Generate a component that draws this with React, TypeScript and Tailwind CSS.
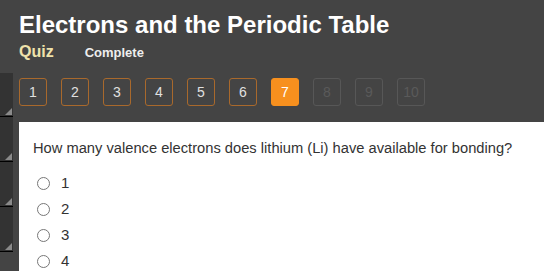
import React from "react";

const font = { fontFamily: '"Liberation Sans", Arial, sans-serif' };

function Tri() {
  return (
    <svg width="7" height="7" viewBox="0 0 7 7" className="absolute right-[1px] bottom-[1px]">
      <polygon points="7,0 7,7 0,7" fill="#8a8a8a" />
    </svg>
  );
}

function Panel({ h }: { h: string }) {
  return (
    <div className={`relative w-[13px] shrink-0 ${h} bg-[#333333] border-b border-black`}>
      <Tri />
    </div>
  );
}

export default function App() {
  const nums = [1, 2, 3, 4, 5, 6, 7, 8, 9, 10];
  const opts = ["1", "2", "3", "4"];
  return (
    <div className="w-[544px] h-[271px] bg-[#444444] overflow-hidden flex flex-col" style={font}>
      <div className="pl-[19px] pt-[11px] h-[73px] shrink-0">
        <div className="text-[24px] leading-[28px] font-bold text-white">Electrons and the Periodic Table</div>
        <div className="flex items-baseline mt-[3px]">
          <span className="text-[16px] leading-[20px] font-bold text-[#efe2ab]">Quiz</span>
          <span className="text-[13px] leading-[20px] font-bold text-[#eeeeee] ml-[31px]">Complete</span>
        </div>
      </div>
      <div className="flex flex-1 min-h-0">
        <div className="w-[19px] shrink-0 flex flex-col">
          <Panel h="h-[44px]" />
          <Panel h="h-[45px]" />
          <Panel h="h-[45px]" />
          <Panel h="h-[45px]" />
        </div>
        <div className="flex-1 flex flex-col min-w-0 min-h-0">
          <div className="flex gap-[14px] pt-[5px] h-[49px] shrink-0">
            {nums.map((n) => {
              const active = n === 7;
              const done = n < 7;
              return (
                <div
                  key={n}
                  className={`w-[28px] h-[28px] rounded-[3px] flex items-center justify-center text-[14px] border ${
                    active
                      ? "bg-[#f7901e] border-[#f7901e] text-white"
                      : done
                      ? "border-[#a9692c] text-[#e0e0e0]"
                      : "border-[#575757] text-[#5a5a5a]"
                  }`}
                >
                  {n}
                </div>
              );
            })}
          </div>
          <div className="flex-1 min-h-0 overflow-hidden bg-white pl-[14px] pt-[18px]">
            <div className="text-[14.7px] leading-[16px] text-[#333333] whitespace-nowrap">
              How many valence electrons does lithium (Li) have available for bonding?
            </div>
            <div className="flex flex-col mt-[14px]">
              {opts.map((o) => (
                <div key={o} className="flex items-center h-[26px] shrink-0">
                  <div className="w-[13px] h-[13px] rounded-full border border-[#777777] ml-[4px] bg-white" />
                  <span className="ml-[11px] text-[15px] text-[#333333]">{o}</span>
                </div>
              ))}
            </div>
          </div>
        </div>
      </div>
    </div>
  );
}
